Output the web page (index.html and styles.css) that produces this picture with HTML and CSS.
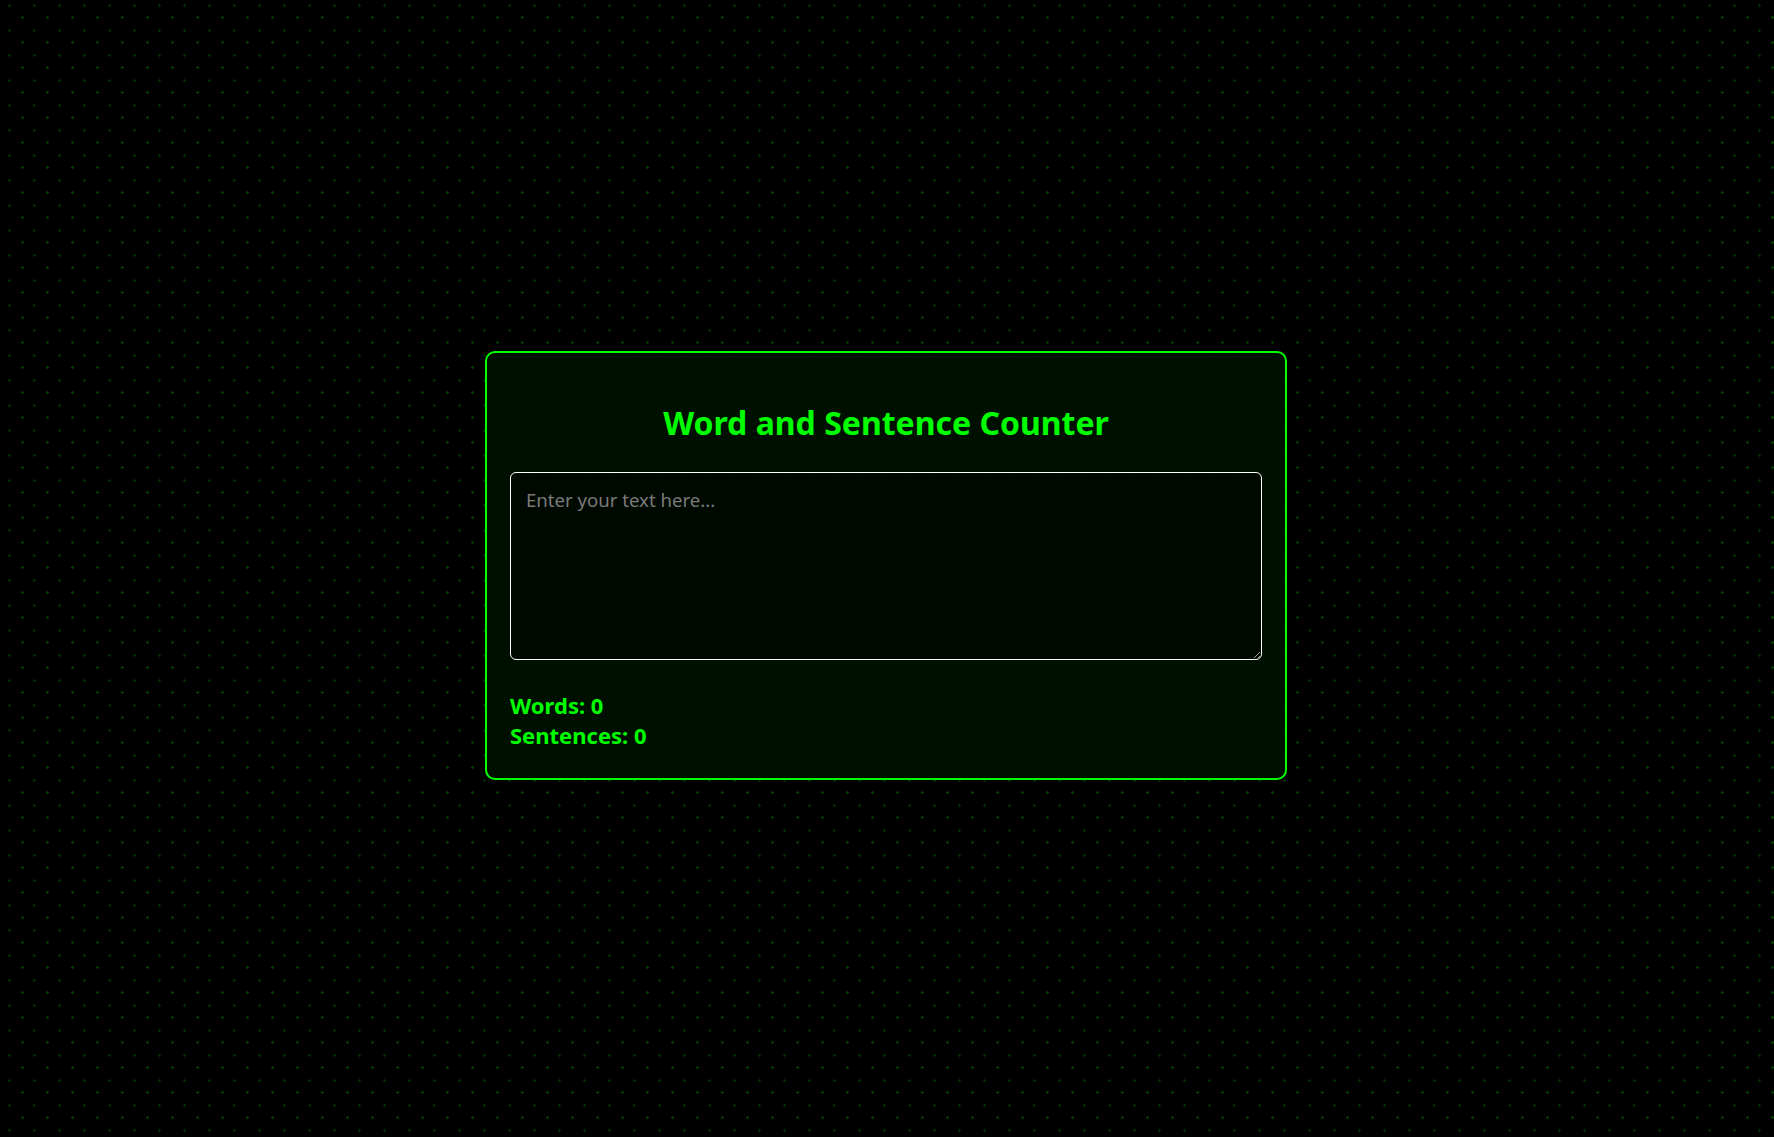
FILE: index.html
```html
<!DOCTYPE html>
<html lang="en">
<head>
<meta charset="UTF-8">
<title>Word and Sentence Counter</title>
<link rel="stylesheet" href="styles.css">
</head>
<body>
<main class="card">
  <h1 class="title">Word and Sentence Counter</h1>
  <textarea class="input" placeholder="Enter your text here..." autofocus></textarea>
  <div class="stats">
    <div class="stat">Words: <span>0</span></div>
    <div class="stat">Sentences: <span>0</span></div>
  </div>
</main>
</body>
</html>
```

FILE: styles.css
```css
html, body {
  margin: 0;
  height: 100%;
}
body {
  background-color: #000;
  background-image:
    radial-gradient(circle, rgba(0, 120, 0, 0.55) 1px, transparent 1.5px),
    radial-gradient(circle, rgba(0, 120, 0, 0.4) 1px, transparent 1.5px);
  background-size: 25px 25px, 25px 25px;
  background-position: 10px 5px, 22px 18px;
  font-family: "Noto Sans", "DejaVu Sans", sans-serif;
  display: flex;
  align-items: center;
  justify-content: center;
}
.card {
  box-sizing: border-box;
  width: 802px;
  padding: 23px 23px 28px;
  border: 2px solid #00ff00;
  border-radius: 10px;
  background: rgba(0, 18, 0, 0.88);
  margin-top: -7px;
  margin-left: -2px;
}
.title {
  margin: 27px 0 29px;
  text-align: center;
  color: #00ff00;
  font-size: 32px;
  line-height: 40px;
  font-weight: bold;
}
.input {
  display: block;
  box-sizing: border-box;
  width: 100%;
  height: 188px;
  padding: 14px 15px;
  border: 1px solid #fff;
  border-radius: 6px;
  background: rgba(0, 8, 0, 0.85);
  color: #00ff00;
  caret-color: #00ff00;
  font-family: inherit;
  font-size: 18.6px;
  resize: vertical;
  outline: none;
}
.input::placeholder {
  color: #7a7a7a;
}
.stats {
  margin-top: 30px;
}
.stat {
  color: #00ff00;
  font-size: 22px;
  line-height: 30px;
  font-weight: bold;
}
```
